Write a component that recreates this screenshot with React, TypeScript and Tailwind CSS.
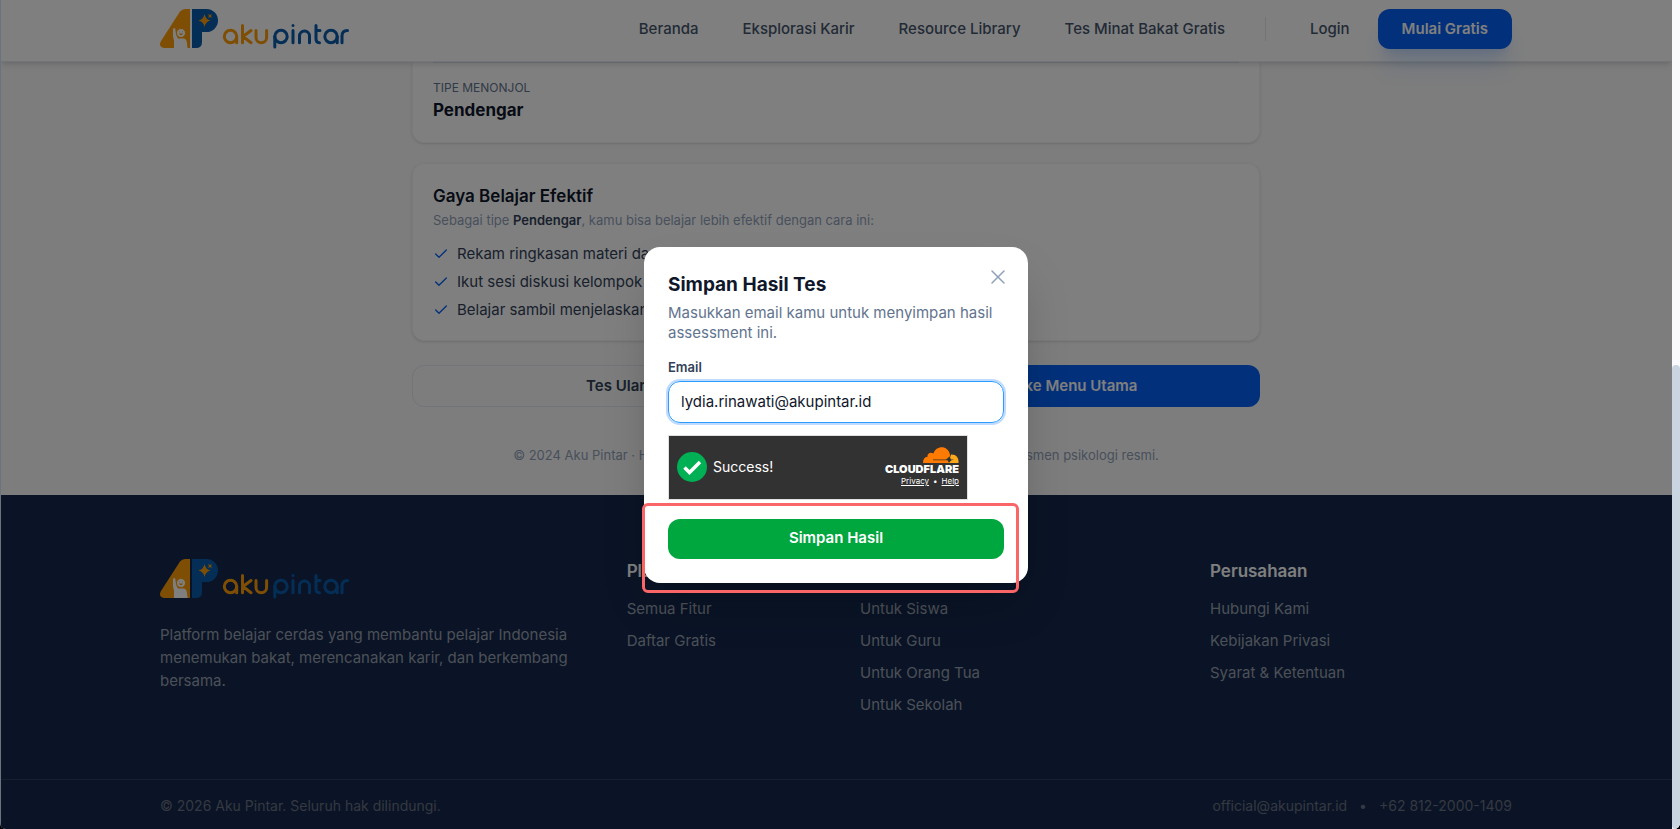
import React from 'react';
import { Check, X } from 'lucide-react';

const NAV_LINKS = ['Beranda', 'Eksplorasi Karir', 'Resource Library', 'Tes Minat Bakat Gratis'];

const TIPS = [
  'Rekam ringkasan materi dan dengarkan kembali',
  'Ikut sesi diskusi kelompok dan tanya jawab',
  'Belajar sambil menjelaskan materi ke teman',
];

const FOOTER_COLUMNS = [
  { title: 'Platform', span: 'col-span-2', links: ['Semua Fitur', 'Daftar Gratis'] },
  { title: 'Solusi', span: 'col-span-3', links: ['Untuk Siswa', 'Untuk Guru', 'Untuk Orang Tua', 'Untuk Sekolah'] },
  { title: 'Perusahaan', span: 'col-span-3', links: ['Hubungi Kami', 'Kebijakan Privasi', 'Syarat & Ketentuan'] },
];

const Logo: React.FC = () => (
  <svg viewBox="0 0 190 40" className="h-10 w-[190px]" role="img" aria-label="Aku Pintar">
    {/* A */}
    <path d="M20 2.500Q22 0 25 0H30V39H4C0 39 -1 35.500 1 32Z" fill="#ff9d0a" />
    <path d="M14 39V32Q12.500 27 13 20.500Q13.300 18.500 14.500 19Q15.500 19.300 15.500 21.500Q16 27 18 29.500H24Q26.500 30 27 34L27.500 39Z" fill="#fff" />
    <circle cx="21" cy="24" r="4.500" fill="#fff" stroke="#ff9d0a" strokeWidth="1" />
    <path d="M18.800 24.500Q21 28 23.200 24.500Z" fill="#ff9d0a" />
    <path d="M19.200 22.800H20M22 22.800H22.800" stroke="#ff9d0a" strokeWidth="0.800" />
    {/* P */}
    <path d="M32 0H46.500A11.500 11.500 0 0 1 46.500 23H42V33Q42 39 36 39H32Z" fill="#0a5cad" />
    <path d="M44.500 5Q45.500 10.500 50.500 11.500Q45.500 12.500 44.500 18Q43.500 12.500 38.500 11.500Q43.500 10.500 44.500 5Z" fill="#ff9d0a" />
    <path d="M48 5L50 6L52 5L51 7L52 9L50 8L48 9L49 7Z" fill="#ff9d0a" />
    {/* wordmark strokes */}
    <g fill="none" strokeWidth="3" strokeLinecap="round" strokeLinejoin="round">
      <g stroke="#ff9d0a">
        <circle cx="70.500" cy="27.500" r="6.200" />
        <path d="M76.700 27.500V33.700M82.500 16.500V33.700M91 21.500L83 27.500L91 33.700M96 21.500V28.500A5.300 5.300 0 0 0 106.600 28.500V21.500" />
      </g>
      <g stroke="#0a5cad">
        <circle cx="121" cy="27.500" r="6.200" />
        <path d="M114.800 27.500V38M133 21.500V33.700M139.500 33.700V27A5 5 0 0 1 149.500 27V33.700M156 16.500V30Q156 33.700 159.500 33.700M156 21.500H160M182 33.700V27Q182 21.500 187.500 21.500" />
        <circle cx="171" cy="27.500" r="6.200" />
        <path d="M177.200 27.500V33.700M133 16.500V16.600" />
      </g>
    </g>
  </svg>
);

const Header: React.FC = () => (
  <header className="relative z-10 border-b border-slate-200 bg-white shadow-md">
    <div className="mx-auto flex max-w-[1400px] items-center justify-between px-6 pt-[9px] pb-3">
      <a href="#beranda"><Logo /></a>
      <nav className="flex items-center text-[15px] font-medium text-slate-600">
        <div className="flex gap-11">
          {NAV_LINKS.map(label => (
            <a key={label} href="#nav" className="whitespace-nowrap">{label}</a>
          ))}
        </div>
        <span className="mx-10 h-6 w-px bg-slate-200" />
        <a href="#login" className="ml-1">Login</a>
        <button className="ml-7 h-10 rounded-xl bg-[#0560f5] px-6 font-semibold whitespace-nowrap text-white shadow-xl shadow-blue-500/20">
          Mulai Gratis
        </button>
      </nav>
    </div>
  </header>
);

const Results: React.FC = () => (
  <main className="mx-auto w-full max-w-4xl px-6 pb-8">
    <section className="rounded-b-xl border border-t-0 border-slate-100 bg-white px-5 pb-5 shadow-sm">
      <hr className="border-slate-200" />
      <div className="pt-[15px]">
        <p className="text-xs leading-5 text-slate-500 uppercase">Tipe Menonjol</p>
        <p className="text-[17px] leading-6 font-bold text-slate-900">Pendengar</p>
      </div>
    </section>

    <section className="mt-5 rounded-xl border border-slate-100 bg-white p-5 shadow-sm">
      <h2 className="text-[17px] leading-6 font-semibold text-slate-900">Gaya Belajar Efektif</h2>
      <p className="mt-0.5 text-[13px] leading-5 text-slate-400">
        Sebagai tipe <strong className="font-semibold text-slate-700">Pendengar</strong>, kamu bisa belajar lebih efektif dengan cara ini:
      </p>
      <ul className="mt-3.5 space-y-2 text-[15px] leading-5 text-slate-700">
        {TIPS.map(tip => (
          <li key={tip} className="flex items-center gap-2">
            <Check size={16} className="text-[#0560f5]" />
            {tip}
          </li>
        ))}
      </ul>
    </section>

    <div className="mt-6 grid grid-cols-2 gap-2 text-[15px] font-semibold">
      <button className="h-[42px] rounded-xl border border-slate-200 text-slate-700">Tes Ulang</button>
      <button className="h-[42px] rounded-xl bg-[#0560f5] text-white">Kembali ke Menu Utama</button>
    </div>

    <p className="mt-10 text-center text-[13px] leading-4 text-slate-400">
      © 2024 Aku Pintar · Hasil tes ini bersifat indikatif dan tidak dapat menggantikan asesmen psikologi resmi.
    </p>
  </main>
);

const Footer: React.FC = () => (
  <footer className="flex-1 bg-[#14284c] text-[15px] text-gray-400">
    <div className="mx-auto grid max-w-[1400px] grid-cols-12 gap-12 px-6 pt-16 pb-16">
      <div className="col-span-4">
        <Logo />
        <p className="mt-6 leading-[23px]">
          Platform belajar cerdas yang membantu pelajar Indonesia menemukan bakat, merencanakan karir, dan berkembang bersama.
        </p>
      </div>
      {FOOTER_COLUMNS.map(col => (
        <div key={col.title} className={col.span}>
          <h3 className="text-[17px] leading-6 font-semibold text-white">{col.title}</h3>
          <ul className="mt-4 space-y-3 leading-5">
            {col.links.map(link => (
              <li key={link}><a href="#footer">{link}</a></li>
            ))}
          </ul>
        </div>
      ))}
    </div>
    <div className="border-t border-white/10">
      <div className="mx-auto flex max-w-[1400px] justify-between px-6 py-4 text-sm leading-5 text-gray-500">
        <p>© 2026 Aku Pintar. Seluruh hak dilindungi.</p>
        <div className="flex gap-3">
          <a href="mailto:official@akupintar.id">official@akupintar.id</a>
          <span>•</span>
          <a href="tel:+6281220001409">+62 812-2000-1409</a>
        </div>
      </div>
    </div>
  </footer>
);

const Turnstile: React.FC = () => (
  <div className="mt-3 flex h-[65px] w-[300px] items-center justify-between border border-[#e0e0e0] bg-[#323232] px-2 text-white">
    <div className="flex items-center gap-1.5">
      <svg viewBox="0 0 30 30" className="size-[30px]">
        <circle cx="15" cy="15" r="15" fill="#00b054" />
        <path d="M7.500 15.500L12.500 20.500L23 10" fill="none" stroke="#fff" strokeWidth="3.500" />
      </svg>
      <span className="text-sm">Success!</span>
    </div>
    <div className="flex flex-col items-end">
      <svg viewBox="0 0 36 16" className="h-4 w-9">
        <path d="M0 16C0 12 1.500 10 4.500 9.800C4 6.500 7.500 4.500 10.500 6.500C13 -2 25.500 -2 27 8L26 16Z" fill="#ff7a00" />
        <path d="M25.500 16L28 7.500C32.500 7 36 10.500 35.500 16Z" fill="#ffa81a" />
        <path d="M10 12.500H23L26.500 9.500L28 12.500H31L28 13.500L26 16L24.500 13.300H10Z" fill="#323232" />
      </svg>
      <span className="text-[11px] leading-3 font-black">CLOUDFLARE</span>
      <span className="flex gap-1 text-[8px] leading-3">
        <a href="#privacy" className="underline">Privacy</a>•<a href="#help" className="underline">Help</a>
      </span>
    </div>
  </div>
);

const SaveModal: React.FC = () => (
  <div className="absolute inset-0 z-20 flex items-center justify-center bg-black/50 shadow-[inset_1px_0_0_#6b7280]">
    <div role="dialog" aria-labelledby="save-title" className="relative w-full max-w-sm rounded-2xl bg-white p-6 shadow-2xl">
      <button aria-label="Tutup" className="absolute top-[18px] right-[18px] text-slate-400">
        <X size={24} strokeWidth={1.5} />
      </button>
      <h2 id="save-title" className="text-[19px] leading-7 font-bold text-slate-900">Simpan Hasil Tes</h2>
      <p className="mt-1 text-[15px] leading-5 text-slate-500">Masukkan email kamu untuk menyimpan hasil assessment ini.</p>
      <form onSubmit={e => e.preventDefault()}>
        <label htmlFor="email" className="mt-4 block text-[13px] leading-4 font-semibold text-slate-700">Email</label>
        <input
          id="email"
          type="email"
          defaultValue="lydia.rinawati@akupintar.id"
          className="mt-1.5 h-[42px] w-full rounded-xl border border-[#2b9bff] px-3 text-[15px] text-slate-900 ring-2 ring-blue-200 outline-none"
        />
        <Turnstile />
        <button className="mt-[19px] h-10 w-full rounded-xl bg-[#00a63e] text-[15px] font-semibold text-white">Simpan Hasil</button>
      </form>
      {/* highlight around the submit area */}
      <div className="pointer-events-none absolute right-[9px] -bottom-2.5 -left-0.5 h-[90px] rounded-md border-3 border-[#fa6568]" />
    </div>
  </div>
);

const App: React.FC = () => (
  <div className="h-screen bg-black font-['Inter',sans-serif]">
    <div className="flex h-full overflow-hidden rounded-b-md bg-[#fafafa]">
      <div className="relative flex min-w-0 flex-1 flex-col overflow-hidden">
        <Header />
        <Results />
        <Footer />
        <SaveModal />
      </div>
      <div className="flex w-2 flex-col justify-end bg-slate-50">
        <div className="h-[56%] rounded-full bg-slate-300" />
      </div>
    </div>
  </div>
);

export default App;
